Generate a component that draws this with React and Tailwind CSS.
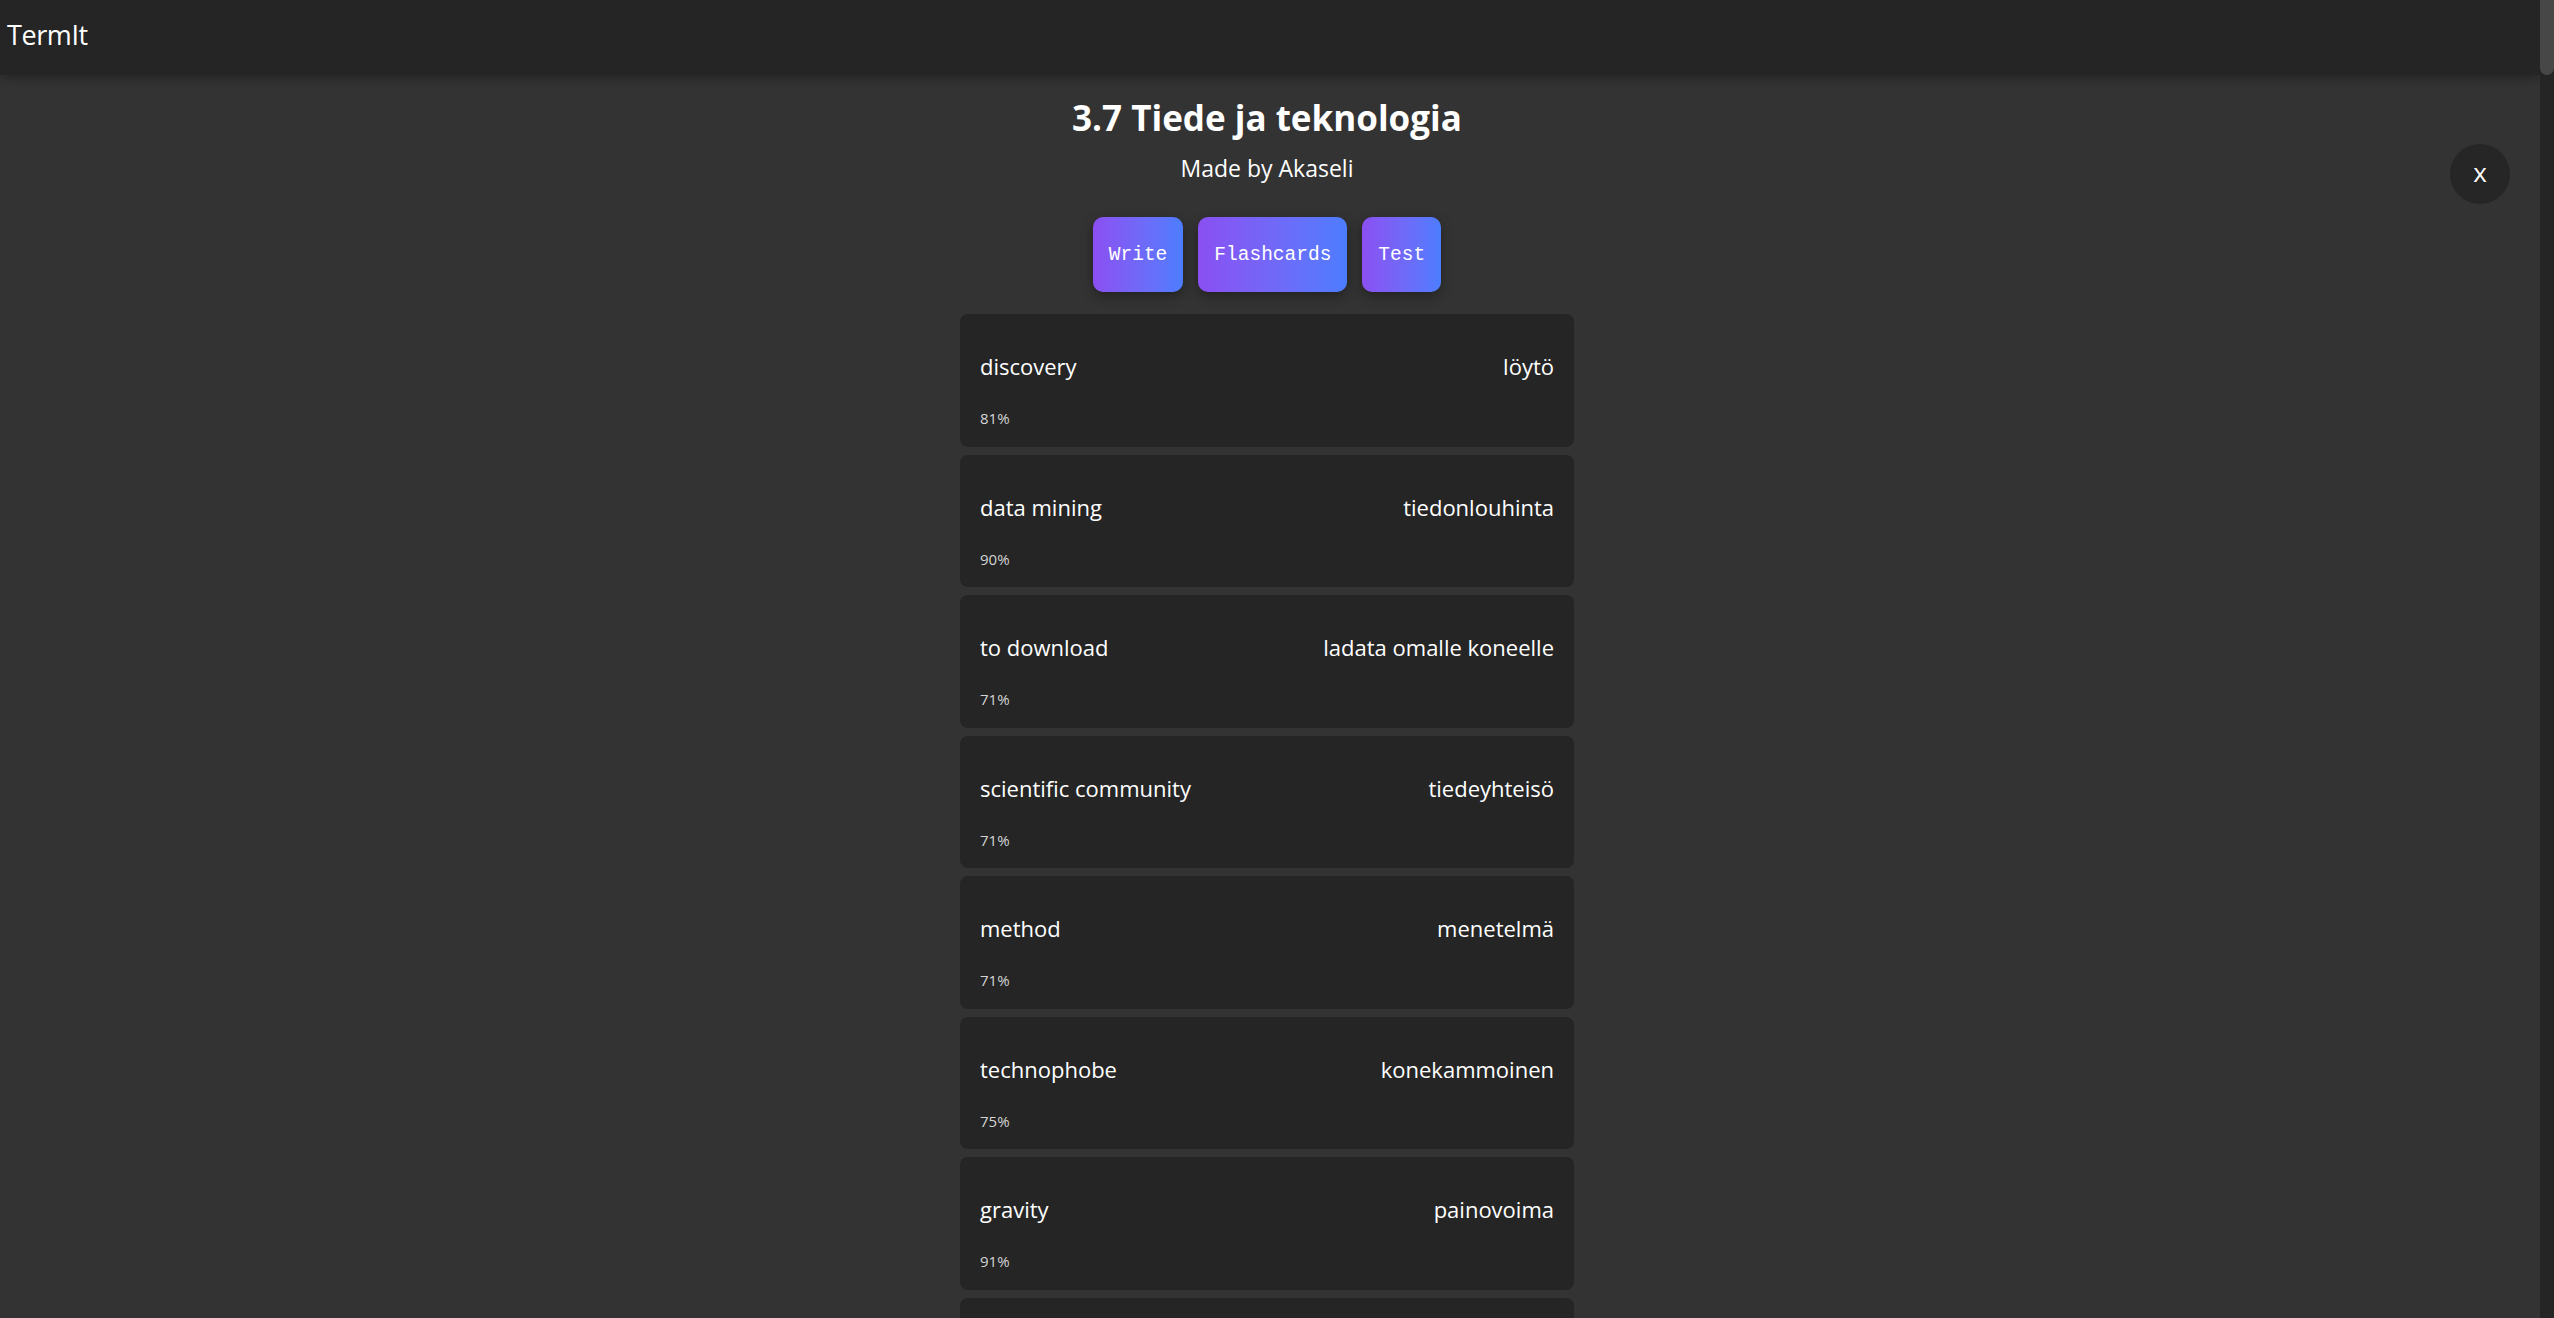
import React from "react";

const cards = [
  { term: "discovery", def: "löytö", pct: "81%" },
  { term: "data mining", def: "tiedonlouhinta", pct: "90%" },
  { term: "to download", def: "ladata omalle koneelle", pct: "71%" },
  { term: "scientific community", def: "tiedeyhteisö", pct: "71%" },
  { term: "method", def: "menetelmä", pct: "71%" },
  { term: "technophobe", def: "konekammoinen", pct: "75%" },
  { term: "gravity", def: "painovoima", pct: "91%" },
  { term: "invention", def: "keksintö", pct: "80%" },
];

function Card({ term, def, pct }) {
  return (
    <div className="h-[132.5px] w-full shrink-0 rounded-[8px] bg-[#252525] px-[20px] pt-[37px]">
      <div className="flex items-start justify-between text-[22px] leading-[30px] text-white">
        <span>{term}</span>
        <span>{def}</span>
      </div>
      <div className="mt-[27px] text-[15px] leading-[20px] text-[#d4d4d4]">{pct}</div>
    </div>
  );
}

function Btn({ children }) {
  return (
    <button className="h-[75px] rounded-[10px] bg-linear-to-r from-[#8a4ff2] to-[#4b7dfe] px-4 pt-[3px] font-['Liberation_Mono','Courier_New',monospace] text-[19.5px] text-white shadow-[0_4px_12px_rgba(0,0,0,0.35)]">
      {children}
    </button>
  );
}

export default function App() {
  return (
    <div className="h-screen overflow-y-auto bg-[#333333] pr-[14px] font-['Open_Sans',sans-serif] text-white">
      <div className="relative">
        <header className="relative z-10 h-[75px] bg-[#252525] px-[7px] pt-[16px] shadow-[0_3px_10px_rgba(0,0,0,0.3)]">
          <div className="text-[27px] leading-[38px] tracking-[-0.4px] text-white">TermIt</div>
        </header>

        <button className="absolute right-[30px] top-[144px] flex h-[60px] w-[60px] items-center justify-center rounded-full bg-[#262626] pb-[5px] text-[26px] leading-[30px] text-white">
          x
        </button>

        <main className="flex flex-col items-center pb-[40px] pr-[6px] pt-[21px]">
          <h1 className="text-[35px] font-bold leading-[44px]">3.7 Tiede ja teknologia</h1>
          <p className="mt-[13px] text-[23px] leading-[30px]">Made by Akaseli</p>
          <div className="mt-[34px] flex gap-[15px]">
            <Btn>Write</Btn>
            <Btn>Flashcards</Btn>
            <Btn>Test</Btn>
          </div>
          <div className="mt-[22px] flex w-[614px] flex-col gap-2">
            {cards.map((c) => (
              <Card key={c.term} {...c} />
            ))}
          </div>
        </main>
      </div>

      <div aria-hidden="true" className="fixed right-0 top-0 z-20 h-screen w-[14px] bg-[#252525]">
        <div className="h-[75px] w-full rounded-b-[7px] bg-[#474747]" />
      </div>
    </div>
  );
}
